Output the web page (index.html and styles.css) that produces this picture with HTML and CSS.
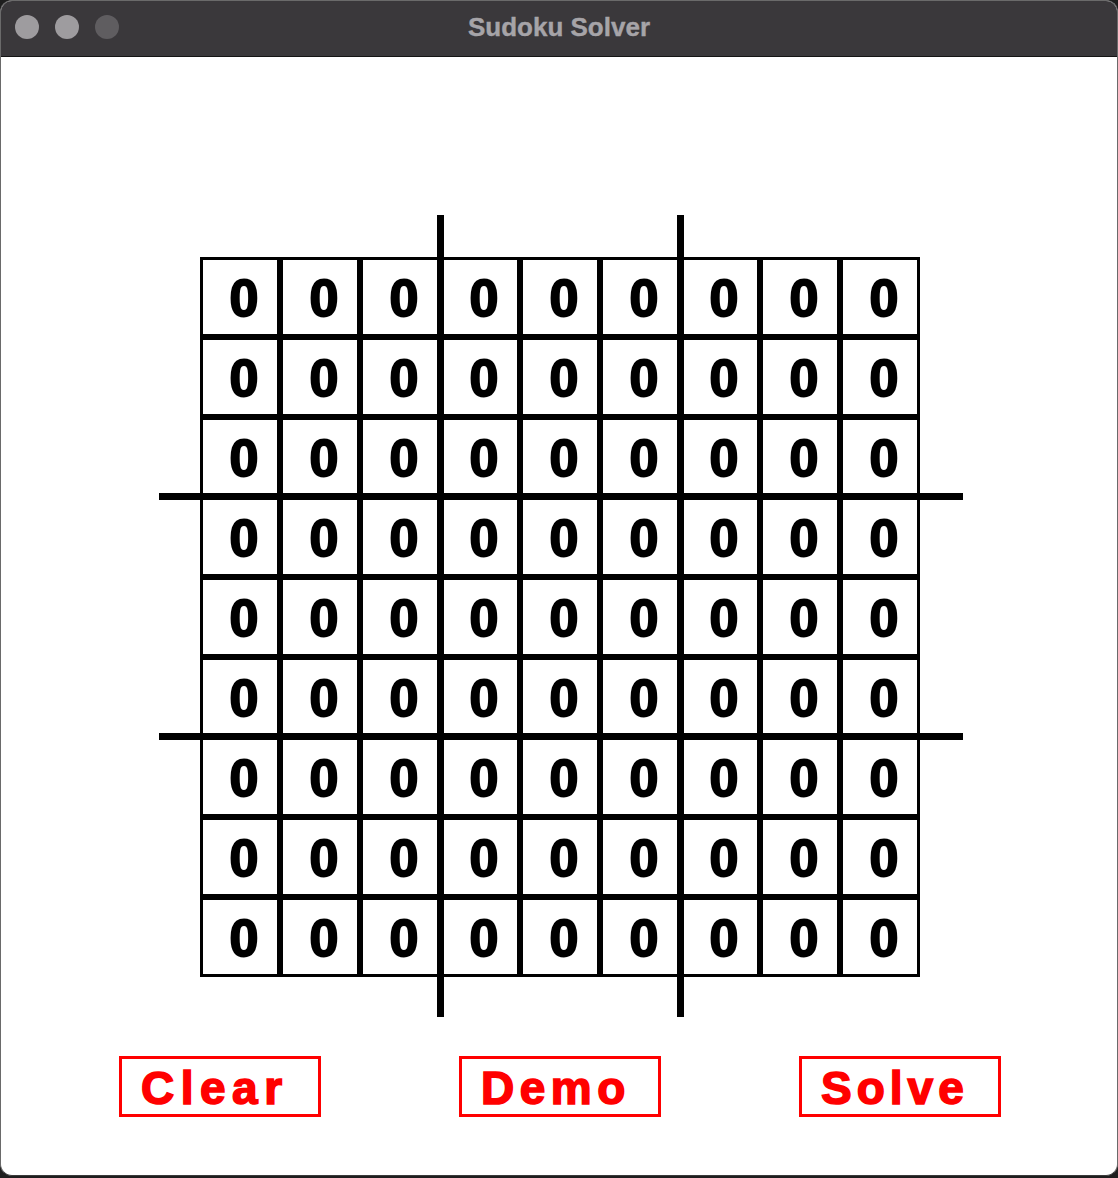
FILE: index.html
```html
<!DOCTYPE html>
<html>
<head>
<meta charset="utf-8">
<title>Sudoku Solver</title>
<link rel="stylesheet" href="styles.css">
</head>
<body>
<div class="window">
  <div class="titlebar">
    <div class="lights">
      <span class="light"></span>
      <span class="light"></span>
      <span class="light dim"></span>
    </div>
    <div class="title">Sudoku Solver</div>
  </div>
  <div class="content">
    <div class="board-wrap">
      <div class="board">
        <div class="cell">0</div><div class="cell">0</div><div class="cell">0</div><div class="cell">0</div><div class="cell">0</div><div class="cell">0</div><div class="cell">0</div><div class="cell">0</div><div class="cell">0</div>
        <div class="cell">0</div><div class="cell">0</div><div class="cell">0</div><div class="cell">0</div><div class="cell">0</div><div class="cell">0</div><div class="cell">0</div><div class="cell">0</div><div class="cell">0</div>
        <div class="cell">0</div><div class="cell">0</div><div class="cell">0</div><div class="cell">0</div><div class="cell">0</div><div class="cell">0</div><div class="cell">0</div><div class="cell">0</div><div class="cell">0</div>
        <div class="cell">0</div><div class="cell">0</div><div class="cell">0</div><div class="cell">0</div><div class="cell">0</div><div class="cell">0</div><div class="cell">0</div><div class="cell">0</div><div class="cell">0</div>
        <div class="cell">0</div><div class="cell">0</div><div class="cell">0</div><div class="cell">0</div><div class="cell">0</div><div class="cell">0</div><div class="cell">0</div><div class="cell">0</div><div class="cell">0</div>
        <div class="cell">0</div><div class="cell">0</div><div class="cell">0</div><div class="cell">0</div><div class="cell">0</div><div class="cell">0</div><div class="cell">0</div><div class="cell">0</div><div class="cell">0</div>
        <div class="cell">0</div><div class="cell">0</div><div class="cell">0</div><div class="cell">0</div><div class="cell">0</div><div class="cell">0</div><div class="cell">0</div><div class="cell">0</div><div class="cell">0</div>
        <div class="cell">0</div><div class="cell">0</div><div class="cell">0</div><div class="cell">0</div><div class="cell">0</div><div class="cell">0</div><div class="cell">0</div><div class="cell">0</div><div class="cell">0</div>
        <div class="cell">0</div><div class="cell">0</div><div class="cell">0</div><div class="cell">0</div><div class="cell">0</div><div class="cell">0</div><div class="cell">0</div><div class="cell">0</div><div class="cell">0</div>
      </div>
      <div class="vline v1"></div>
      <div class="vline v2"></div>
      <div class="hline h1"></div>
      <div class="hline h2"></div>
    </div>
    <div class="buttons">
      <div class="btn btn-clear">Clear</div>
      <div class="btn btn-demo">Demo</div>
      <div class="btn btn-solve">Solve</div>
    </div>
  </div>
</div>
</body>
</html>
```

FILE: styles.css
```css
html, body {
  margin: 0;
  padding: 0;
}
body {
  background: #1e1e1e;
  width: 1118px;
  height: 1178px;
  overflow: hidden;
  font-family: "Liberation Sans", Arial, sans-serif;
}
.window {
  width: 1118px;
  height: 1176px;
  box-sizing: border-box;
  background: #ffffff;
  border-radius: 12px;
  overflow: hidden;
  border: 1px solid #6a6a6a;
  border-bottom-color: #3a3a3a;
}
.titlebar {
  position: relative;
  height: 55px;
  background: #3a383b;
  border-bottom: 1px solid #151515;
  display: flex;
  align-items: center;
  justify-content: center;
}
.lights {
  position: absolute;
  left: 14px;
  top: 14px;
  display: flex;
  gap: 16px;
}
.light {
  width: 24px;
  height: 24px;
  border-radius: 50%;
  background: #9e9c9f;
}
.light.dim {
  background: #5f5d60;
}
.title {
  color: #a6a4a8;
  font-weight: bold;
  font-size: 26px;
  -webkit-text-stroke: 0.4px #a6a4a8;
  margin-top: -2px;
}
.content {
  padding-top: 200px;
}
.board-wrap {
  position: relative;
  margin-left: 199px;
  width: 722px;
  height: 722px;
}
.board {
  display: grid;
  grid-template-columns: repeat(9, 80px);
  grid-template-rows: repeat(9, 80px);
  width: 720px;
  height: 720px;
}
.cell {
  box-sizing: border-box;
  border: 3px solid #000;
  display: flex;
  align-items: center;
  justify-content: center;
  padding-left: 8px;
  padding-top: 1px;
  font-weight: bold;
  font-size: 52px;
  color: #000;
  -webkit-text-stroke: 2px #000;
  line-height: 1;
}
.vline {
  position: absolute;
  top: -42px;
  width: 7px;
  height: 802px;
  background: #000;
}
.v1 { left: 237px; }
.v2 { left: 477px; }
.hline {
  position: absolute;
  left: -41px;
  width: 804px;
  height: 7px;
  background: #000;
}
.h1 { top: 236px; }
.h2 { top: 476px; }
.buttons {
  display: flex;
  gap: 138px;
  padding-left: 118px;
  margin-top: 77px;
}
.btn {
  box-sizing: border-box;
  width: 202px;
  height: 61px;
  border: 3px solid #ff0000;
  color: #ff0000;
  font-weight: bold;
  font-size: 46px;
  -webkit-text-stroke: 1.6px #ff0000;
  display: flex;
  align-items: center;
  padding-left: 19px;
  padding-top: 2px;
  line-height: 1;
  white-space: nowrap;
}
.btn-clear { letter-spacing: 6.5px; }
.btn-demo { letter-spacing: 5.5px; }
.btn-solve { letter-spacing: 5px; }
```
